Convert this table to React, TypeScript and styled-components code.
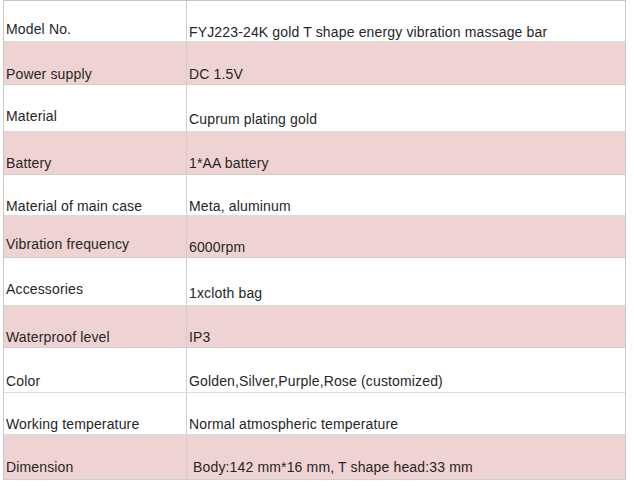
import React from "react";
import styled, { createGlobalStyle } from "styled-components";

const Global = createGlobalStyle`
  html, body { margin: 0; padding: 0; background: #fff; }
  body { font-family: "Liberation Sans", Arial, sans-serif; }
`;

const Wrap = styled.div`
  padding: 0 0 0 3px;
`;

const Table = styled.div`
  width: 623px;
  box-sizing: border-box;
  border: 1px solid #c8c8c8;
  border-bottom: none;
  display: flex;
  flex-direction: column;
`;

const Row = styled.div<{ $pink: boolean; $h: number }>`
  display: grid;
  grid-template-columns: 183px 1fr;
  height: ${(p) => p.$h}px;
  box-sizing: border-box;
  background: ${(p) => (p.$pink ? "#efd3d3" : "#ffffff")};
  border-bottom: 1px solid ${(p) => (p.$pink ? "#cfcfcf" : "#dcdcdc")};
`;

const Cell = styled.div<{ $pt: number; $first?: boolean }>`
  box-sizing: border-box;
  padding: ${(p) => p.$pt}px 0 0 2px;
  font-size: 14px;
  line-height: 16px;
  letter-spacing: 0.15px;
  color: #262626;
  white-space: nowrap;
  border-right: ${(p) => (p.$first ? "1px solid #d0d0d0" : "none")};
`;

type R = { k: string; v: string; h: number; pl: number; pr: number; pink: boolean };

const rows: R[] = [
  { k: "Model No.", v: "FYJ223-24K gold T shape energy vibration massage bar", h: 41, pl: 20, pr: 23, pink: false },
  { k: "Power supply", v: "DC 1.5V", h: 43, pl: 24, pr: 24, pink: true },
  { k: "Material", v: "Cuprum plating gold", h: 47, pl: 23, pr: 26, pink: false },
  { k: "Battery", v: "1*AA battery", h: 43, pl: 23, pr: 23, pink: true },
  { k: "Material of main case", v: "Meta, aluminum", h: 41, pl: 23, pr: 23, pink: false },
  { k: "Vibration frequency", v: "6000rpm", h: 42, pl: 20, pr: 23, pink: true },
  { k: "Accessories", v: "1xcloth bag", h: 48, pl: 23, pr: 27, pink: false },
  { k: "Waterproof level", v: "IP3", h: 42, pl: 23, pr: 23, pink: true },
  { k: "Color", v: "Golden,Silver,Purple,Rose (customized)", h: 45, pl: 25, pr: 25, pink: false },
  { k: "Working temperature", v: "Normal atmospheric temperature", h: 42, pl: 23, pr: 23, pink: false },
  { k: "Dimension", v: "\u00a0Body:142 mm*16 mm, T shape head:33 mm", h: 45, pl: 24, pr: 24, pink: true },
];

export default function App() {
  return (
    <>
      <Global />
      <Wrap>
        <Table>
          {rows.map((r) => (
            <Row key={r.k} $pink={r.pink} $h={r.h}>
              <Cell $first $pt={r.pl}>{r.k}</Cell>
              <Cell $pt={r.pr}>{r.v}</Cell>
            </Row>
          ))}
        </Table>
      </Wrap>
    </>
  );
}
